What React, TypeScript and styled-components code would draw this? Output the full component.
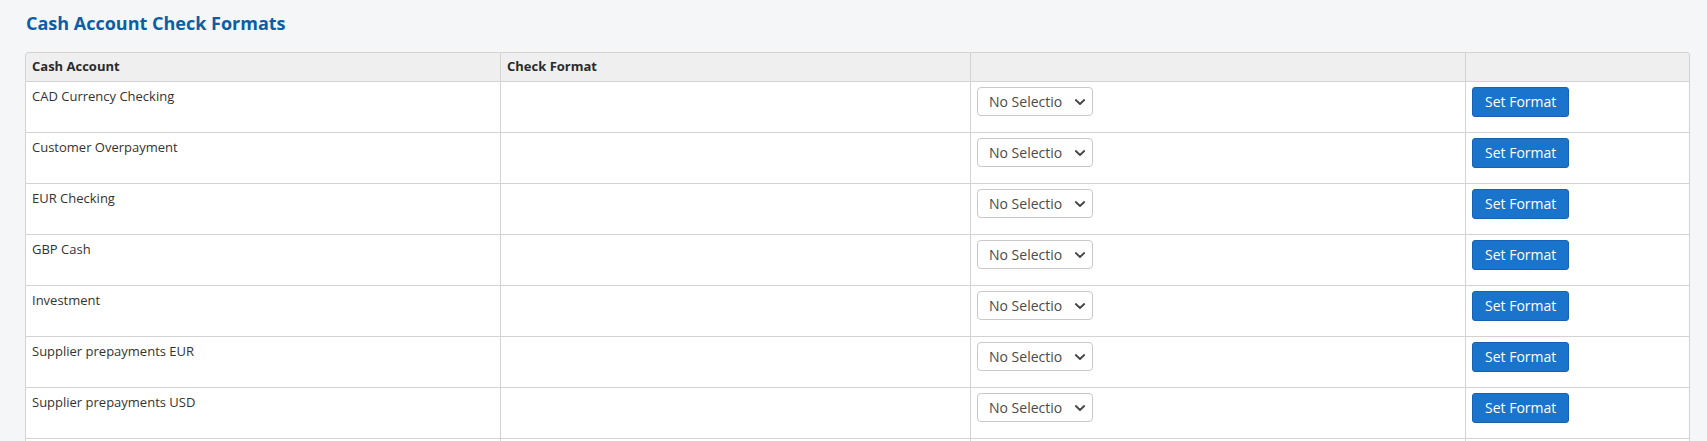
import React from "react";
import styled, { createGlobalStyle } from "styled-components";

const GlobalStyle = createGlobalStyle`
  html, body {
    margin: 0;
    padding: 0;
    background: #f5f6f8;
    font-family: "Open Sans", "Noto Sans", Arial, sans-serif;
    color: #333;
  }
`;

const Page = styled.div`
  padding: 12px 18px 0 25px;
`;

const Title = styled.h2`
  margin: 0 0 18px 0;
  font-size: 18px;
  line-height: 22px;
  font-weight: 700;
  color: #0b5ea5;
  padding-left: 1px;
`;

const Table = styled.table`
  width: 1665px;
  table-layout: fixed;
  border-collapse: separate;
  border-spacing: 0;
  background: #fff;
  font-size: 13px;
  line-height: 19.5px;
`;

const HeadCell = styled.th`
  background: #efefef;
  text-align: left;
  font-weight: 700;
  color: #2b2b2b;
  height: 28px;
  padding: 0 6px;
  vertical-align: middle;
  border-top: 1px solid #d3d3d3;
  border-right: 1px solid #d3d3d3;
  border-bottom: 1px solid #d3d3d3;
  &:first-child {
    border-left: 1px solid #d3d3d3;
    border-top-left-radius: 3px;
  }
  &:last-child {
    border-top-right-radius: 3px;
  }
`;

const Cell = styled.td`
  height: 40px;
  padding: 5px 6px 5px 6px;
  vertical-align: top;
  color: #333;
  border-right: 1px solid #d3d3d3;
  border-bottom: 1px solid #d3d3d3;
  &:first-child {
    border-left: 1px solid #d3d3d3;
  }
`;

const SelectWrap = styled.div`
  position: relative;
  width: 116px;
  height: 29px;
`;

const Select = styled.select`
  appearance: none;
  -webkit-appearance: none;
  width: 116px;
  height: 29px;
  box-sizing: border-box;
  margin: 0;
  padding: 0 30px 0 11px;
  border: 1px solid #c9c9c9;
  border-radius: 4px;
  background: #fff;
  font-family: "Open Sans", "Noto Sans", Arial, sans-serif;
  font-size: 14px;
  color: #4a4a4a;
  outline: none;
`;

const Chevron = styled.svg`
  position: absolute;
  right: 7px;
  top: 9px;
  width: 12px;
  height: 12px;
  pointer-events: none;
`;

const Button = styled.button`
  height: 30px;
  box-sizing: border-box;
  padding: 0 12px;
  border: 1px solid #1762b0;
  border-radius: 3px;
  background: #1b74cb;
  color: #fff;
  font-family: "Open Sans", "Noto Sans", Arial, sans-serif;
  font-size: 14px;
  line-height: 28px;
  cursor: pointer;
`;

const accounts = [
  "CAD Currency Checking",
  "Customer Overpayment",
  "EUR Checking",
  "GBP Cash",
  "Investment",
  "Supplier prepayments EUR",
  "Supplier prepayments USD",
];

export default function App() {
  return (
    <>
      <GlobalStyle />
      <Page>
        <Title>Cash Account Check Formats</Title>
        <Table>
          <colgroup>
            <col style={{ width: 476 }} />
            <col style={{ width: 470 }} />
            <col style={{ width: 495 }} />
            <col style={{ width: 224 }} />
          </colgroup>
          <thead>
            <tr>
              <HeadCell>Cash Account</HeadCell>
              <HeadCell>Check Format</HeadCell>
              <HeadCell />
              <HeadCell />
            </tr>
          </thead>
          <tbody>
            {accounts.map((a) => (
              <tr key={a}>
                <Cell>{a}</Cell>
                <Cell />
                <Cell>
                  <SelectWrap>
                    <Select defaultValue="">
                      <option value="">No Selection</option>
                    </Select>
                    <Chevron viewBox="0 0 12 12">
                      <path
                        d="M1.8 4 L6 8 L10.2 4"
                        fill="none"
                        stroke="#444"
                        strokeWidth="1.8"
                        strokeLinecap="round"
                        strokeLinejoin="round"
                      />
                    </Chevron>
                  </SelectWrap>
                </Cell>
                <Cell>
                  <Button>Set Format</Button>
                </Cell>
              </tr>
            ))}
            <tr>
              <Cell />
              <Cell />
              <Cell />
              <Cell />
            </tr>
          </tbody>
        </Table>
      </Page>
    </>
  );
}
